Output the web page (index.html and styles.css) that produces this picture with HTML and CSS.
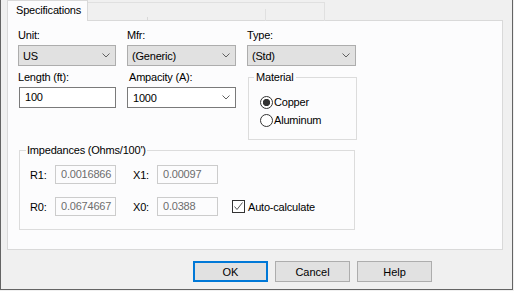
FILE: index.html
```html
<!DOCTYPE html>
<html lang="en">
<head>
  <meta charset="UTF-8">
  <title>Specifications</title>
  <link rel="stylesheet" href="styles.css">
</head>
<body>
  <div class="window">
    <!-- Tab strip -->
    <div class="tabs">
      <div class="tab">Specifications</div>
      <div class="ghost-tabs">
        <span class="ghost g1"></span>
        <span class="ghost g2"></span>
        <span class="ghost g3"></span>
      </div>
    </div>

    <div class="panel">
      <div class="top">
        <div class="col col-unit">
          <div class="field">
            <label>Unit:</label>
            <div class="combo"><span>US</span>
              <svg class="chev" width="8" height="5" viewBox="0 0 8 5"><polyline points="0.5,0.5 4,4 7.5,0.5" /></svg>
            </div>
          </div>
          <div class="field">
            <label>Length (ft):</label>
            <div class="textbox length">100</div>
          </div>
        </div>

        <div class="col col-mfr">
          <div class="field">
            <label>Mfr:</label>
            <div class="combo"><span>(Generic)</span>
              <svg class="chev" width="8" height="5" viewBox="0 0 8 5"><polyline points="0.5,0.5 4,4 7.5,0.5" /></svg>
            </div>
          </div>
          <div class="field">
            <label class="amp-label">Ampacity (A):</label>
            <div class="combo editable"><span>1000</span>
              <svg class="chev" width="8" height="5" viewBox="0 0 8 5"><polyline points="0.5,0.5 4,4 7.5,0.5" /></svg>
            </div>
          </div>
        </div>

        <div class="col col-type">
          <div class="field">
            <label>Type:</label>
            <div class="combo"><span>(Std)</span>
              <svg class="chev" width="8" height="5" viewBox="0 0 8 5"><polyline points="0.5,0.5 4,4 7.5,0.5" /></svg>
            </div>
          </div>
          <fieldset class="group material">
            <legend>Material</legend>
            <div class="radios">
              <div class="radio"><span class="dot checked"></span>Copper</div>
              <div class="radio"><span class="dot"></span>Aluminum</div>
            </div>
          </fieldset>
        </div>
      </div>

      <fieldset class="group imp">
        <legend>Impedances (Ohms/100')</legend>
        <div class="imp-row">
          <span class="imp-label">R1:</span>
          <div class="readonly">0.0016866</div>
          <span class="imp-label x">X1:</span>
          <div class="readonly">0.00097</div>
        </div>
        <div class="imp-row second">
          <span class="imp-label">R0:</span>
          <div class="readonly">0.0674667</div>
          <span class="imp-label x">X0:</span>
          <div class="readonly">0.0388</div>
          <div class="check">
            <span class="box">
              <svg width="11" height="11" viewBox="0 0 11 11"><polyline points="1.5,5.5 4,8.5 9.5,1.5" /></svg>
            </span>Auto-calculate
          </div>
        </div>
      </fieldset>
    </div>

    <div class="buttons">
      <button class="btn default">OK</button>
      <button class="btn">Cancel</button>
      <button class="btn">Help</button>
    </div>
  </div>
</body>
</html>
```

FILE: styles.css
```css
body {
  margin: 0;
  background: #f0f0f0;
  font-family: "Segoe UI", "Liberation Sans", Arial, sans-serif;
  font-size: 11px;
  letter-spacing: -0.2px;
  color: #000;
}

.window {
  width: 513px;
  height: 290px;
  box-sizing: border-box;
  border-left: 1px solid #646464;
  border-right: 1px solid #646464;
  border-bottom: 1px solid #646464;
  padding-left: 6px;
  background: #f0f0f0;
}

/* tabs */
.tabs {
  display: flex;
  height: 20px;
}

.tab {
  position: relative;
  z-index: 1;
  width: 81px;
  height: 21px;
  box-sizing: border-box;
  border: 1px solid #d9d9d9;
  border-bottom: none;
  background: #fcfcfd;
  padding-left: 8px;
  line-height: 18px;
}

.ghost-tabs {
  display: flex;
  margin-top: 2px;
  height: 18px;
  border-top: 1px solid #e0e0e0;
}

.ghost {
  border-right: 1px solid #e0e0e0;
}

.g1 { width: 59px; height: 4px; margin-top: 14px; border-color: #d8d8d8; }
.g2 { width: 117px; height: 12px; margin-top: 6px; }
.g3 { width: 58px; }

.panel {
  width: 496px;
  height: 230px;
  box-sizing: border-box;
  border: 1px solid #d9d9d9;
  background: #fcfcfd;
  padding: 7px 10px 0 10px;
}

.top {
  display: flex;
  gap: 11px;
}

.col-unit { width: 98px; }
.col-mfr { width: 109px; }
.col-type { width: 109px; }

.field {
  margin-bottom: 4px;
}

.field label {
  display: block;
  height: 15px;
  line-height: 15px;
  margin-bottom: 2px;
}

.amp-label {
  padding-left: 2px;
}

.combo {
  height: 21px;
  box-sizing: border-box;
  border: 1px solid #adadad;
  background: #e1e1e1;
  display: flex;
  align-items: center;
  justify-content: space-between;
  padding: 0 5px 0 4px;
}

.combo.editable {
  background: #fff;
  border-color: #7a7a7a;
  padding-left: 5px;
}

.chev polyline {
  fill: none;
  stroke: #606060;
  stroke-width: 1;
}

.textbox {
  height: 21px;
  box-sizing: border-box;
  border: 1px solid #7a7a7a;
  background: #fff;
  padding-left: 5px;
  line-height: 19px;
}

.textbox.length {
  margin-left: 1px;
  width: 97px;
}

/* group boxes */
.group {
  margin: 0;
  border: 1px solid #dcdcdc;
  min-width: 0;
  box-sizing: border-box;
}

.group legend {
  line-height: 14px;
  padding: 0 2px;
}

.material {
  margin: 3px 0 0 1px;
  width: 109px;
  padding: 0 0 10px 5px;
}

.radios {
  margin: 9px 0 0 6px;
}

.radio {
  display: flex;
  align-items: center;
  height: 18px;
}

.dot {
  width: 13px;
  height: 13px;
  box-sizing: border-box;
  border: 1px solid #333;
  border-radius: 50%;
  background: #fff;
  margin-right: 1px;
}

.dot.checked {
  background: radial-gradient(circle, #333 0 3.3px, #fff 4px);
}

.imp {
  margin: 3px 0 0 1px;
  width: 336px;
  padding: 0 0 13px 6px;
}

.imp legend {
  padding: 0 1px;
}

.imp-row {
  display: flex;
  align-items: center;
  margin: 8px 0 0 4px;
}

.imp-row.second {
  margin-top: 13px;
}

.imp-label {
  width: 25px;
}

.imp-label.x {
  width: 24px;
  margin-left: 17px;
}

.readonly {
  width: 61px;
  height: 19px;
  box-sizing: border-box;
  border: 1px solid #cccccc;
  color: #6d6d6d;
  padding-left: 5px;
  line-height: 17px;
}

.check {
  display: flex;
  align-items: center;
  margin-left: 14px;
}

.check .box {
  width: 13px;
  height: 13px;
  box-sizing: border-box;
  border: 1px solid #333;
  background: #fff;
  margin-right: 3px;
  display: flex;
}

.check polyline {
  fill: none;
  stroke: #555;
  stroke-width: 1;
}

/* dialog buttons */
.buttons {
  display: flex;
  gap: 7px;
  margin: 11px 0 0 186px;
}

.btn {
  width: 75px;
  height: 21px;
  box-sizing: border-box;
  border: 1px solid #adadad;
  background: #e1e1e1;
  font: inherit;
  color: #000;
  padding: 0;
}

.btn.default {
  border: 2px solid #0078d7;
}
```
